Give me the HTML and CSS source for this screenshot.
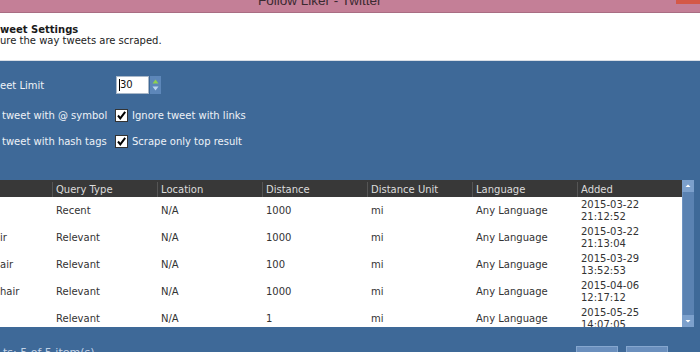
FILE: index.html
```html
<!DOCTYPE html>
<html>
<head>
<meta charset="utf-8">
<link rel="stylesheet" href="styles.css">
</head>
<body>
<div class="titlebar">
  <span class="title">Follow Liker - Twitter</span>
  <span class="close"></span>
</div>
<div class="head">
  <div class="h1">weet Settings</div>
  <div class="h2">ure the way tweets are scraped.</div>
</div>
<div class="main">
  <div class="settings">
    <div class="row r1">
      <span class="lbl">eet Limit</span>
      <div class="num">
        <div class="numbox"><span class="caret"></span>30</div>
        <div class="spin">
          <svg width="11" height="18" viewBox="0 0 11 18"><path d="M2.5 7.5 L5.5 3.5 L8.5 7.5 Z" fill="#8fd14f"/><path d="M2.5 10.5 L5.5 14.5 L8.5 10.5 Z" fill="#b9d3f0"/></svg>
        </div>
      </div>
    </div>
    <div class="row r2">
      <span class="lbl ind">tweet with @ symbol</span>
      <span class="cb"><svg width="11" height="11" viewBox="0 0 11 11"><path d="M2 5.5 L4.3 8.3 L9.2 1.8" fill="none" stroke="#000" stroke-width="2"/></svg></span>
      <span class="cbl">Ignore tweet with links</span>
    </div>
    <div class="row r3">
      <span class="lbl ind">tweet with hash tags</span>
      <span class="cb"><svg width="11" height="11" viewBox="0 0 11 11"><path d="M2 5.5 L4.3 8.3 L9.2 1.8" fill="none" stroke="#000" stroke-width="2"/></svg></span>
      <span class="cbl">Scrape only top result</span>
    </div>
  </div>
  <div class="tablewrap">
    <div class="table">
      <div class="thead">
        <div class="th first"></div>
        <div class="th">Query Type</div>
        <div class="th">Location</div>
        <div class="th">Distance</div>
        <div class="th">Distance Unit</div>
        <div class="th">Language</div>
        <div class="th">Added</div>
      </div>
      <div class="tbody">
        <div class="tr"><div class="td first"></div><div class="td">Recent</div><div class="td">N/A</div><div class="td">1000</div><div class="td">mi</div><div class="td">Any Language</div><div class="td two">2015-03-22<br>21:12:52</div></div>
        <div class="tr"><div class="td first">ir</div><div class="td">Relevant</div><div class="td">N/A</div><div class="td">1000</div><div class="td">mi</div><div class="td">Any Language</div><div class="td two">2015-03-22<br>21:13:04</div></div>
        <div class="tr"><div class="td first">air</div><div class="td">Relevant</div><div class="td">N/A</div><div class="td">100</div><div class="td">mi</div><div class="td">Any Language</div><div class="td two">2015-03-29<br>13:52:53</div></div>
        <div class="tr"><div class="td first">hair</div><div class="td">Relevant</div><div class="td">N/A</div><div class="td">1000</div><div class="td">mi</div><div class="td">Any Language</div><div class="td two">2015-04-06<br>12:17:12</div></div>
        <div class="tr"><div class="td first"></div><div class="td">Relevant</div><div class="td">N/A</div><div class="td">1</div><div class="td">mi</div><div class="td">Any Language</div><div class="td two">2015-05-25<br>14:07:05</div></div>
      </div>
    </div>
    <div class="scroll">
      <div class="sbtn"><svg width="12" height="12" viewBox="0 0 12 12"><path d="M3.5 7 L6 4.5 L8.5 7 Z" fill="#fff"/></svg></div>
      <div class="track"></div>
      <div class="sbtn"><svg width="12" height="12" viewBox="0 0 12 12"><path d="M3.5 5 L6 7.5 L8.5 5 Z" fill="#fff"/></svg></div>
    </div>
  </div>
  <div class="footer">
    <span class="ftext">ts: 5 of 5 item(s)</span>
    <div class="btns"><span class="btn"></span><span class="btn"></span></div>
  </div>
</div>
</body>
</html>
```
FILE: styles.css
```css
html, body {
  margin: 0;
  padding: 0;
}
body {
  width: 700px;
  height: 352px;
  overflow: hidden;
  font-family: "DejaVu Sans", Verdana, sans-serif;
  font-size: 10px;
  background: #3e6998;
}
.titlebar {
  display: flex;
  align-items: flex-end;
  height: 12px;
  overflow: hidden;
  background: #c47f97;
  border-bottom: 1px solid #a96d83;
}
.title {
  margin-left: 258px;
  margin-bottom: 4px;
  font-family: "Liberation Sans", Arial, sans-serif;
  font-size: 13.5px;
  line-height: 14px;
  color: #3b2a31;
  white-space: nowrap;
}
.close {
  margin-left: auto;
  align-self: flex-start;
  width: 24px;
  height: 4px;
  background: #d45847;
}
.head {
  box-sizing: border-box;
  height: 48px;
  padding-top: 11px;
  background: #fff;
  border-bottom: 1px solid #d9dee5;
  color: #1a1a1a;
}
.h1 {
  font-weight: bold;
  line-height: 11px;
}
.h2 {
  line-height: 11px;
  color: #222;
}
.main {
  background: #3e6998;
}
.settings {
  padding-top: 15px;
  color: #eef2f7;
}
.row {
  display: flex;
  align-items: center;
  height: 18px;
}
.r2 { margin-top: 12px; }
.r3 { margin-top: 8px; }
.lbl {
  width: 115px;
  white-space: nowrap;
}
.ind { box-sizing: border-box; padding-left: 2px; }
.num {
  display: flex;
  margin-left: 1px;
  height: 18px;
}
.numbox {
  box-sizing: border-box;
  width: 33px;
  height: 18px;
  background: #fff;
  border: 1px solid #a9b8c9;
  color: #111;
  line-height: 16px;
  padding-left: 2px;
  display: flex;
  align-items: center;
}
.caret {
  width: 1px;
  height: 12px;
  background: #000;
}
.spin {
  width: 11px;
  height: 18px;
  background: #5d87b9;
  margin-left: 1px;
}
.spin svg { display: block; }
.cb {
  box-sizing: border-box;
  width: 13px;
  height: 13px;
  background: #fff;
  border: 1px solid #333;
  display: flex;
  align-items: center;
  justify-content: center;
}
.cb svg { display: block; }
.cbl {
  margin-left: 4px;
  white-space: nowrap;
}
.tablewrap {
  display: flex;
  margin-top: 30px;
  height: 147px;
}
.table {
  width: 682px;
}
.thead, .tr {
  display: grid;
  grid-template-columns: 52px repeat(6, 105px);
}
.thead {
  box-sizing: border-box;
  height: 17px;
  padding-top: 2px;
  background: #383838;
  color: #dcdcdc;
  line-height: 15px;
}
.th {
  border-left: 1px solid #555;
  padding-left: 3px;
  white-space: nowrap;
}
.th.first { border-left: none; padding-left: 0; }
.tbody {
  height: 130px;
  overflow: hidden;
  background: #fff;
  color: #333;
}
.tr {
  height: 27px;
}
.td {
  display: flex;
  align-items: center;
  padding-left: 4px;
  padding-top: 1px;
  white-space: nowrap;
  line-height: 12px;
}
.td.first { padding-left: 0; }
.scroll {
  display: flex;
  flex-direction: column;
  width: 12px;
  background: #4f78a9;
}
.sbtn {
  height: 12px;
  background: #7ca0cc;
}
.sbtn svg { display: block; }
.track {
  flex: 1;
  background: #5a82b2;
  border-left: 1px solid #6f94c2;
}
.footer {
  display: flex;
  height: 25px;
  padding-left: 3px;
}
.ftext {
  margin-top: 19px;
  color: #c2d2e6;
  font-size: 11px;
  white-space: nowrap;
}
.btns {
  margin-left: auto;
  margin-right: 32px;
  margin-top: 19px;
  display: flex;
  gap: 8px;
}
.btn {
  box-sizing: border-box;
  width: 42px;
  height: 20px;
  background: #6a8fbd;
  border: 1px solid #86a7cf;
}
```
